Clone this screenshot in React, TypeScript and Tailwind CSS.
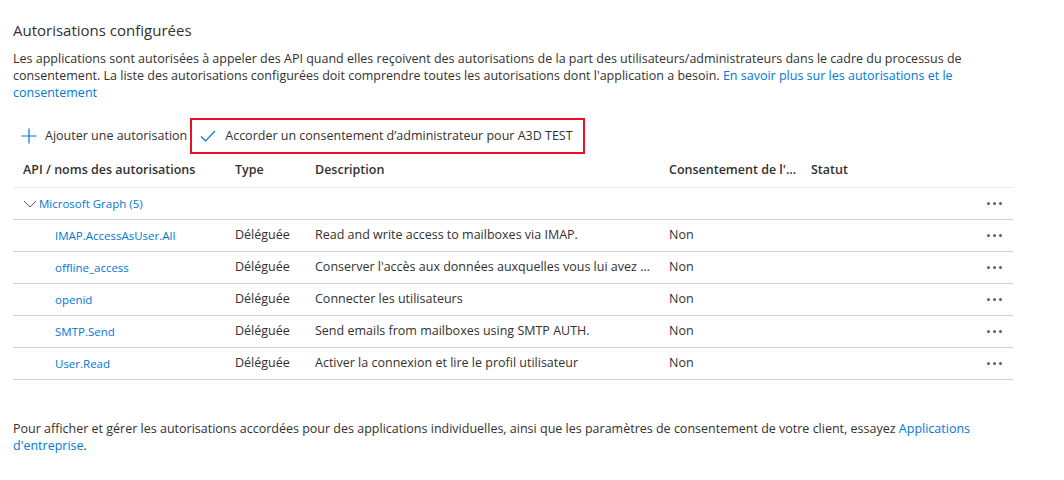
import React from 'react';

interface Permission {
    name: string;
    type: string;
    description: string;
    consent: string;
}

const permissions: Permission[] = [
    { name: 'IMAP.AccessAsUser.All', type: 'Déléguée', description: 'Read and write access to mailboxes via IMAP.', consent: 'Non' },
    { name: 'offline_access', type: 'Déléguée', description: "Conserver l'accès aux données auxquelles vous lui avez donné accès", consent: 'Non' },
    { name: 'openid', type: 'Déléguée', description: 'Connecter les utilisateurs', consent: 'Non' },
    { name: 'SMTP.Send', type: 'Déléguée', description: 'Send emails from mailboxes using SMTP AUTH.', consent: 'Non' },
    { name: 'User.Read', type: 'Déléguée', description: 'Activer la connexion et lire le profil utilisateur', consent: 'Non' },
];

const cols = 'grid grid-cols-[212px_80px_354px_142px_1fr_42px]';

const Dots: React.FC = () => (
    <div className="flex items-center gap-[3px] pl-[16px]">
        <span className="w-[3px] h-[3px] rounded-full bg-[#605e5c]" />
        <span className="w-[3px] h-[3px] rounded-full bg-[#605e5c]" />
        <span className="w-[3px] h-[3px] rounded-full bg-[#605e5c]" />
    </div>
);

const PlusIcon: React.FC = () => (
    <svg width="16" height="16" viewBox="0 0 16 16" fill="none">
        <path d="M8 0.5V15.5M0.5 8H15.5" stroke="#0078d4" strokeWidth="1.2" />
    </svg>
);

const CheckIcon: React.FC = () => (
    <svg width="16" height="16" viewBox="0 0 16 16" fill="none">
        <path d="M1 8.5L5.5 13L15 3" stroke="#0078d4" strokeWidth="1.2" />
    </svg>
);

const ChevronDown: React.FC = () => (
    <svg width="14" height="14" viewBox="0 0 14 14" fill="none">
        <path d="M1 4L7 10L13 4" stroke="#605e5c" strokeWidth="1" />
    </svg>
);

export default function App() {
    return (
        <div className="w-[1064px] h-[480px] bg-white text-[#323130] text-[12.5px] font-['Open_Sans',sans-serif] pl-[13px] pt-[19px]">
            <div className="w-[1000px]">
                <h2 className="text-[15px] leading-[22px]">Autorisations configurées</h2>
                <p className="mt-[9px] leading-[17px]">
                    Les applications sont autorisées à appeler des API quand elles reçoivent des autorisations de la part des utilisateurs/administrateurs dans le cadre du processus de consentement. La liste des autorisations configurées doit comprendre toutes les autorisations dont l'application a besoin.{' '}
                    <a className="text-[#0078d4]">En savoir plus sur les autorisations et le consentement</a>
                </p>

                <div className="mt-[17px] flex items-center h-[36px]">
                    <button className="flex items-center h-full pl-[8px] pr-[3px]">
                        <PlusIcon />
                        <span className="ml-[8px]">Ajouter une autorisation</span>
                    </button>
                    <button className="flex items-center h-full border-2 border-[#e81123] pl-[8px] pr-[10px]">
                        <CheckIcon />
                        <span className="ml-[9px]">Accorder un consentement d’administrateur pour A3D TEST</span>
                    </button>
                </div>

                <div className={`${cols} h-[34px] items-center font-semibold border-b border-[#edebe9]`}>
                    <div className="pl-[10px] truncate">API / noms des autorisations</div>
                    <div className="pl-[10px]">Type</div>
                    <div className="pl-[10px]">Description</div>
                    <div className="pl-[10px] truncate">Consentement de l'administrateur requis</div>
                    <div className="pl-[10px]">Statut</div>
                    <div />
                </div>

                <div className={`${cols} h-[32px] items-center border-b border-[#d2d0ce]`}>
                    <div className="col-span-5 flex items-center pl-[10px]">
                        <ChevronDown />
                        <span className="ml-[2px] text-[11.5px] text-[#0078d4]">Microsoft Graph (5)</span>
                    </div>
                    <Dots />
                </div>

                {permissions.map(p => (
                    <div key={p.name} className={`${cols} h-[32px] items-center border-b border-[#d2d0ce]`}>
                        <div className="pl-[42px] text-[11.5px] text-[#0078d4] truncate">{p.name}</div>
                        <div className="pl-[10px]">{p.type}</div>
                        <div className="pl-[10px] pr-[2px] truncate">{p.description}</div>
                        <div className="pl-[10px]">{p.consent}</div>
                        <div />
                        <Dots />
                    </div>
                ))}

                <p className="mt-[40px] leading-[17px]">
                    Pour afficher et gérer les autorisations accordées pour des applications individuelles, ainsi que les paramètres de consentement de votre client, essayez{' '}
                    <a className="text-[#0078d4]">Applications d'entreprise</a>.
                </p>
            </div>
        </div>
    );
}
